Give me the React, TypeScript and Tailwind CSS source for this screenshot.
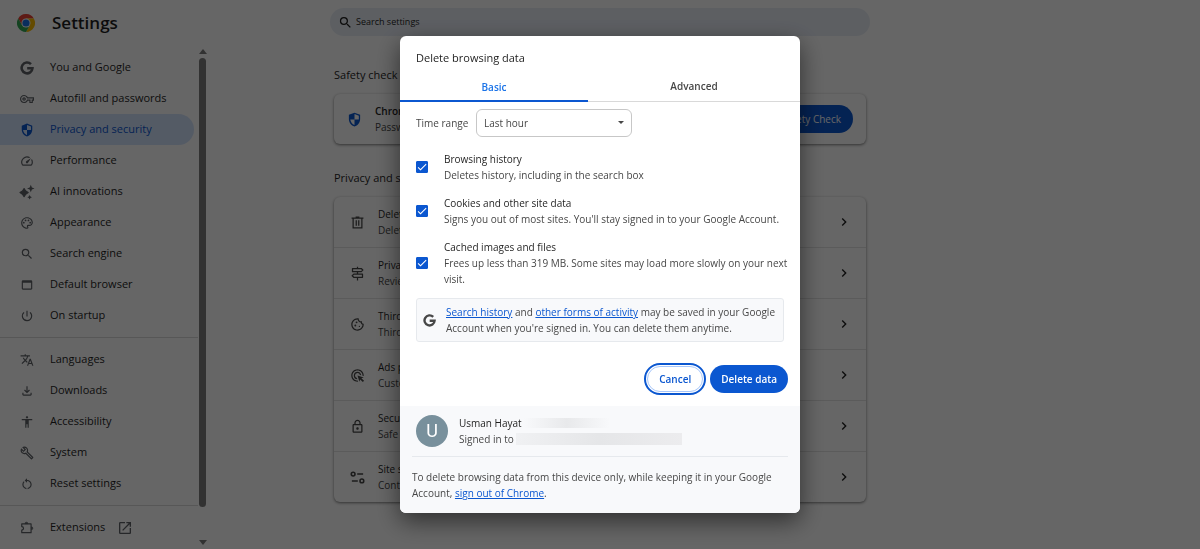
import { useState } from "react"
import type { ReactNode } from "react"
import {
  MdAccessibility,
  MdAdsClick,
  MdCheck,
  MdChevronRight,
  MdOpenInNew,
  MdOutlineBuild,
  MdOutlineCookie,
  MdOutlineFileDownload,
  MdOutlineLock,
  MdOutlinePalette,
  MdOutlineSpeed,
  MdOutlineVpnKey,
  MdOutlineWebAsset,
  MdPowerSettingsNew,
  MdRestartAlt,
  MdSearch,
  MdTranslate,
} from "react-icons/md"

function ChromeLogo() {
  return (
    <svg viewBox="0 0 48 48" className="size-[18px]" aria-hidden="true">
      <path d="M24 12h20.8A24 24 0 0 0 3.2 12l10.4 18z" fill="#ea4335" />
      <path d="M34.4 30 24 48A24 24 0 0 0 44.8 12H24z" fill="#fbbc04" />
      <path d="M13.6 30 3.2 12A24 24 0 0 0 24 48l10.4-18z" fill="#34a853" />
      <circle cx="24" cy="24" r="12" fill="#fff" />
      <circle cx="24" cy="24" r="9.5" fill="#1a73e8" />
    </svg>
  )
}

function GoogleIcon() {
  return (
    <svg viewBox="0 0 24 24" className="size-full" fill="none" stroke="currentColor" strokeWidth="4.4" aria-hidden="true">
      <path d="M18.8 5.4A9.3 9.3 0 1 0 21.4 12.4H12.3" />
    </svg>
  )
}

function ShieldIcon() {
  return (
    <svg viewBox="0 0 24 24" className="size-full" fill="currentColor" aria-hidden="true">
      <path d="M12 1 3 4.5v6.6C3 16.6 6.8 21.7 12 23c5.2-1.3 9-6.4 9-11.9V4.500zm0 2.300 6.900 2.600V12H12v8.800C8.500 19.600 5.900 16.100 5.200 12H12z" />
    </svg>
  )
}

function SparkIcon() {
  return (
    <svg viewBox="0 0 24 24" className="size-full overflow-visible" fill="currentColor" aria-hidden="true">
      <path d="M7 6 9.800 10.200 14 13 9.800 15.800 7 20 4.200 15.800 0 13 4.200 10.200z" stroke="currentColor" strokeWidth="2" strokeLinejoin="round" />
      <path d="m18.500-.5 1.900 4.600L25 6l-4.600 1.900-1.900 4.600-1.900-4.600L12 6l4.600-1.900z" />
      <path d="m16.500 17 1.400 2.600 2.600 1.400-2.600 1.400-1.400 2.600-1.400-2.600-2.600-1.400 2.600-1.400z" />
    </svg>
  )
}

function PuzzleIcon() {
  return (
    <svg viewBox="0 0 24 24" className="size-full" fill="none" stroke="currentColor" strokeWidth="2" strokeLinejoin="round" aria-hidden="true">
      <path d="M3 5h16v15H3v-4.500a3 3 0 0 0 0-6z" />
      <path d="M8.500 4.500a2.500 2.500 0 0 1 5 0zM19.500 10a2.500 2.500 0 0 1 0 5z" fill="currentColor" strokeWidth="1" />
    </svg>
  )
}

function TrashIcon() {
  return (
    <svg viewBox="0 0 24 24" className="size-full" fill="none" stroke="currentColor" strokeWidth="2" aria-hidden="true">
      <path d="M2.500 5h19M9 3.500h6M5 5v15.500h14V5M10 8.500v8.500M14 8.500v8.500" />
    </svg>
  )
}

function SignpostIcon() {
  return (
    <svg viewBox="0 0 24 24" className="size-full" fill="none" stroke="currentColor" strokeWidth="2" strokeLinejoin="round" aria-hidden="true">
      <path d="M4 4h14l2.500 2.500L18 9H4zM20 13H6l-2.500 2.500L6 18h14zM12 1v3M12 9v4M12 18v5" />
    </svg>
  )
}

function TuneIcon() {
  return (
    <svg viewBox="0 0 24 24" className="size-full" fill="none" stroke="currentColor" strokeWidth="2.500" aria-hidden="true">
      <circle cx="5" cy="6.500" r="3" />
      <path d="M11.500 6.500H21M3 17.500h9.500" />
      <circle cx="19" cy="17.500" r="3" />
    </svg>
  )
}

const navGroups: { label: string; icon: ReactNode; external?: boolean }[][] = [
  [
    { label: "You and Google", icon: <GoogleIcon /> },
    { label: "Autofill and passwords", icon: <MdOutlineVpnKey className="size-full" /> },
    { label: "Privacy and security", icon: <ShieldIcon /> },
    { label: "Performance", icon: <MdOutlineSpeed className="size-full" /> },
    { label: "AI innovations", icon: <SparkIcon /> },
    { label: "Appearance", icon: <MdOutlinePalette className="size-full" /> },
    { label: "Search engine", icon: <MdSearch className="size-full" /> },
    { label: "Default browser", icon: <MdOutlineWebAsset className="size-full" /> },
    { label: "On startup", icon: <MdPowerSettingsNew className="size-full" /> },
  ],
  [
    { label: "Languages", icon: <MdTranslate className="size-full" /> },
    { label: "Downloads", icon: <MdOutlineFileDownload className="size-full" /> },
    { label: "Accessibility", icon: <MdAccessibility className="size-full" /> },
    { label: "System", icon: <MdOutlineBuild className="size-full" /> },
    { label: "Reset settings", icon: <MdRestartAlt className="size-full" /> },
  ],
  [{ label: "Extensions", icon: <PuzzleIcon />, external: true }],
]

const privacyRows = [
  { title: "Delete browsing data", text: "Delete history, cookies, cache, and more", icon: <TrashIcon /> },
  { title: "Privacy Guide", text: "Review key privacy and security controls", icon: <SignpostIcon /> },
  { title: "Third-party cookies", text: "Third-party cookies are blocked in Incognito mode", icon: <MdOutlineCookie className="size-full" /> },
  { title: "Ads privacy", text: "Customize the info used by sites to show you ads", icon: <MdAdsClick className="size-full" /> },
  { title: "Security", text: "Safe Browsing and other security settings", icon: <MdOutlineLock className="size-full" /> },
  { title: "Site settings", text: "Controls what information sites can use and show", icon: <TuneIcon /> },
]

const dataTypes = [
  { id: "history", title: "Browsing history", text: "Deletes history, including in the search box" },
  {
    id: "cookies",
    title: "Cookies and other site data",
    text: "Signs you out of most sites. You'll stay signed in to your Google Account.",
  },
  {
    id: "cache",
    title: "Cached images and files",
    text: "Frees up less than 319 MB. Some sites may load more slowly on your next visit.",
  },
]

function Sidebar() {
  return (
    <aside className="flex min-h-0">
      <nav className="min-w-0 flex-1 overflow-hidden pt-[5px]">
        {navGroups.map((group, i) => (
          <ul key={i} className={i > 0 ? "mt-[6px] border-t border-[#d9d9d9] pt-[6px]" : ""}>
            {group.map((item) => {
              const active = item.label === "Privacy and security"
              return (
                <li key={item.label}>
                  <a
                    href="#"
                    className={`mr-1 flex h-[31px] items-center rounded-r-full pl-5 text-[11px] font-medium ${
                      active ? "bg-[#d3e3fd] text-[#0b57d0]" : "text-[#1f1f1f]"
                    }`}
                  >
                    <span className={`mr-4 size-[14px] shrink-0 ${active ? "" : "text-[#5f6368]"}`}>{item.icon}</span>
                    {item.label}
                    {item.external && <MdOpenInNew className="ml-3 size-4 text-[#5f6368]" />}
                  </a>
                </li>
              )
            })}
          </ul>
        ))}
      </nav>
      <div className="mr-px flex w-[9px] flex-col items-center pb-1" aria-hidden="true">
        <span className="mt-[2px] border-x-4 border-b-[5px] border-x-transparent border-b-[#7d7d7d]"></span>
        <span className="my-1 w-[7px] flex-1 rounded-full bg-[#7d7d7d]"></span>
        <span className="mt-[29px] border-x-4 border-t-[5px] border-x-transparent border-t-[#7d7d7d]"></span>
      </div>
    </aside>
  )
}

function MainContent() {
  return (
    <main className="mx-auto w-full max-w-[532px] pt-5 text-[#1f1f1f]">
      <h2 className="text-[11px] leading-4">Safety check</h2>
      <section className="mt-[11px] flex h-[50px] items-center rounded-md bg-white pr-[13px] pl-[13px] shadow-[0_1px_3px_rgba(0,0,0,0.5)]">
        <span className="size-[15px] shrink-0 text-[#0b57d0]">
          <ShieldIcon />
        </span>
        <div className="ml-[13px] flex-1 text-[10px] leading-4">
          <p className="font-semibold">Chrome found some safety recommendations</p>
          <p className="text-[#474747]">Passwords, extensions</p>
        </div>
        <button className="h-7 rounded-full bg-[#0b57d0] px-3 text-[10px] font-medium text-white">Go to Safety Check</button>
      </section>

      <h2 className="mt-[26px] text-[11px] leading-4">Privacy and security</h2>
      <ul className="mt-[11px] divide-y divide-[#e3e3e3] rounded-md bg-white shadow-[0_1px_3px_rgba(0,0,0,0.5)]">
        {privacyRows.map((row) => (
          <li key={row.title}>
            <a href="#" className="flex h-[50px] items-center pr-[14px] pl-4">
              <span className="size-[15px] shrink-0 text-[#474747]">{row.icon}</span>
              <span className="ml-[13px] flex-1 text-[10px] leading-4">
                <span className="block">{row.title}</span>
                <span className="block text-[#474747]">{row.text}</span>
              </span>
              <MdChevronRight className="size-4" />
            </a>
          </li>
        ))}
      </ul>
    </main>
  )
}

function DeleteDialog() {
  const [checked, setChecked] = useState<Record<string, boolean>>({ history: true, cookies: true, cache: true })

  return (
    <div
      role="dialog"
      aria-modal="true"
      aria-labelledby="dialog-title"
      className="w-[400px] overflow-hidden rounded-md bg-white text-[10px] leading-4 text-[#474747] shadow-[0_8px_24px_rgba(0,0,0,0.55)]"
    >
      <h2 id="dialog-title" className="px-4 pt-[14px] text-[11px] leading-4 text-[#1f1f1f]">
        Delete browsing data
      </h2>

      <div role="tablist" className="mt-[5px] flex border-b border-[#d9d9d9] text-[10px] font-semibold">
        <button role="tab" aria-selected="true" className="-mb-px h-[31px] w-[47%] border-b-2 border-[#0b57d0] pt-[2px] text-[#1a73e8]">
          Basic
        </button>
        <button role="tab" aria-selected="false" className="h-[30px] flex-1">
          Advanced
        </button>
      </div>

      <div className="px-4">
        <div className="mt-[7px] flex items-center">
          <label htmlFor="time-range" className="w-[60px]">
            Time range
          </label>
          <div className="relative">
            <select
              id="time-range"
              className="block h-7 w-[156px] appearance-none rounded-md border border-[#c7c7c7] bg-white px-[7px] text-[10px]"
            >
              <option>Last hour</option>
              <option>Last 24 hours</option>
              <option>Last 7 days</option>
              <option>Last 4 weeks</option>
              <option>All time</option>
            </select>
            <span className="pointer-events-none absolute top-3 right-2 border-x-[3px] border-t-[3px] border-x-transparent border-t-[#474747]"></span>
          </div>
        </div>

        <div className="-mr-2 mt-[14px] space-y-3">
          {dataTypes.map((type) => (
            <div key={type.id} className="flex items-center">
              <span className="relative size-3 shrink-0">
                <input
                  id={type.id}
                  type="checkbox"
                  checked={checked[type.id]}
                  onChange={() => setChecked({ ...checked, [type.id]: !checked[type.id] })}
                  className="block size-3 appearance-none rounded-[1px] border border-[#0b57d0] checked:bg-[#0b57d0]"
                />
                {checked[type.id] && <MdCheck className="pointer-events-none absolute inset-0 size-3 text-white" />}
              </span>
              <label htmlFor={type.id} className="ml-4 flex-1">
                <span className="block text-[#1f1f1f]">{type.title}</span>
                <span className="block">{type.text}</span>
              </label>
            </div>
          ))}
        </div>

        <div className="mt-[11px] flex items-center rounded-[3px] border border-[#e6e9ed] bg-[#f8f9fb] px-[6px] py-[5px]">
          <span className="size-[13px] shrink-0">
            <GoogleIcon />
          </span>
          <p className="ml-[10px]">
            <a href="#" className="text-[#0b57d0] underline">
              Search history
            </a>{" "}
            and{" "}
            <a href="#" className="text-[#0b57d0] underline">
              other forms of activity
            </a>{" "}
            may be saved in your Google Account when you're signed in. You can delete them anytime.
          </p>
        </div>
      </div>

      <div className="mt-[21px] flex items-center justify-end gap-1 pr-3 pb-[11px] text-[10px] font-semibold">
        <button className="h-8 rounded-full border-2 border-[#0b57d0] p-px text-[#0b57d0]">
          <span className="flex h-[26px] items-center rounded-full border border-[#a8c7fa] px-[11px]">Cancel</span>
        </button>
        <button className="h-7 rounded-full bg-[#0b57d0] px-[11px] text-white">Delete data</button>
      </div>

      <footer className="bg-[#f8f9fb] px-3">
        <div className="flex items-center border-b border-[#e6e9ed] py-[9px] pl-1">
          <span className="flex size-8 items-center justify-center rounded-full bg-[#78909c] font-[Roboto] text-lg text-white">U</span>
          <div className="ml-[11px]">
            <p className="flex items-center text-[#1f1f1f]">
              Usman Hayat
              <span className="ml-[2px] h-[10px] w-[86px] bg-linear-to-r from-[#f8f9fb] via-[#e8e9eb] to-[#f8f9fb]"></span>
            </p>
            <p className="flex items-center">
              Signed in to
              <span className="ml-[2px] h-3 w-[166px] bg-linear-to-r from-[#f0f1f3] via-[#e5e6e8] to-[#ececee]"></span>
            </p>
          </div>
        </div>
        <p className="pt-3 pb-3">
          To delete browsing data from this device only, while keeping it in your Google Account,{" "}
          <a href="#" className="text-[#0b57d0] underline">
            sign out of Chrome
          </a>
          .
        </p>
      </footer>
    </div>
  )
}

export default function App() {
  return (
    <div className="flex h-screen flex-col overflow-hidden bg-white font-['Open_Sans','Noto_Sans',sans-serif]">
      <header className="grid h-[47px] shrink-0 grid-cols-[208px_1fr_208px]">
        <div className="flex h-[45px] items-center pl-[17px]">
          <ChromeLogo />
          <h1 className="ml-[17px] text-[17px] font-semibold text-[#1f1f1f]">Settings</h1>
        </div>
        <label className="mx-auto mt-2 flex h-7 w-full max-w-[540px] items-center rounded-full bg-[#e9eef6] pl-2">
          <MdSearch className="size-[15px] text-[#1f1f1f]" />
          <input
            type="text"
            placeholder="Search settings"
            aria-label="Search settings"
            className="ml-[3px] flex-1 bg-transparent text-[9px] font-medium outline-none placeholder:text-[#1f1f1f]"
          />
        </label>
      </header>
      <div className="grid min-h-0 flex-1 grid-cols-[208px_1fr_208px]">
        <Sidebar />
        <MainContent />
      </div>

      <div className="fixed inset-0 flex items-center justify-center bg-black/60">
        <DeleteDialog />
      </div>
    </div>
  )
}
